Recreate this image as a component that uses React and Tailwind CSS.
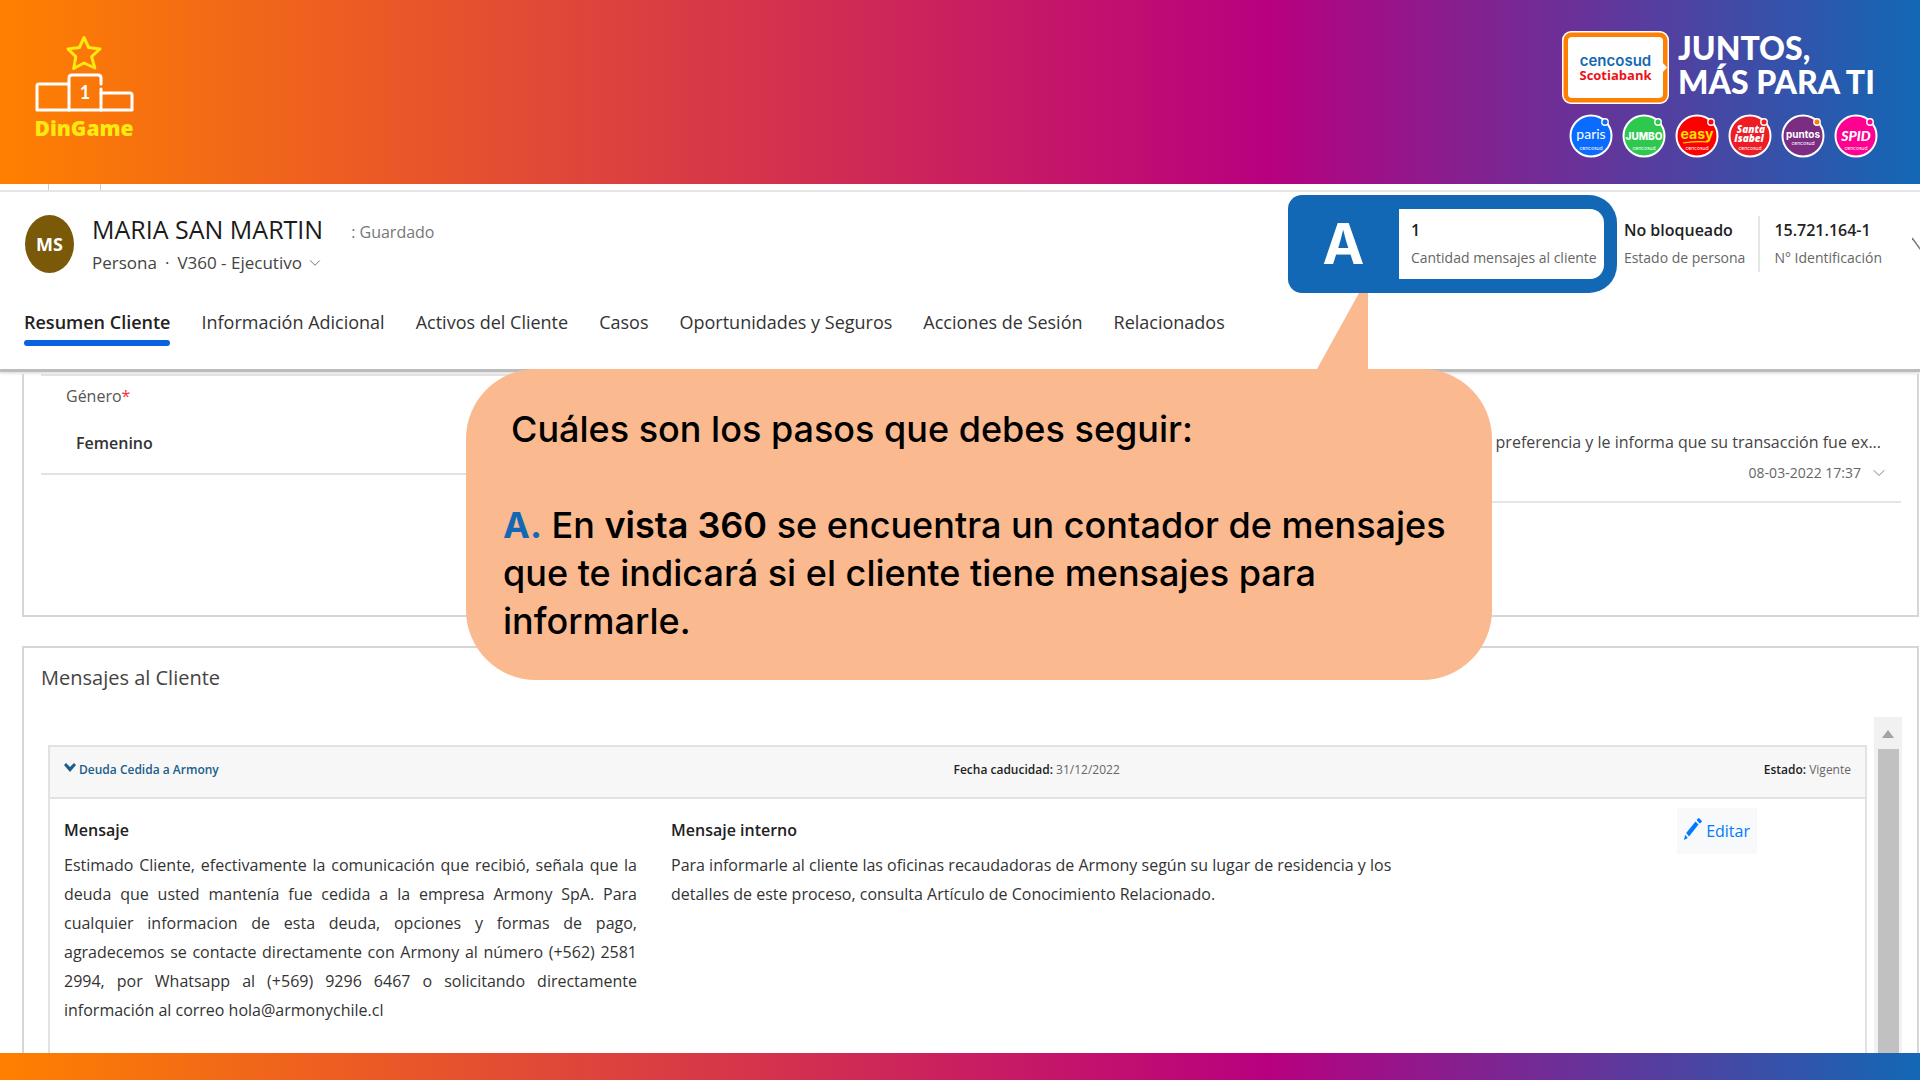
import { useState } from 'react';
import { ChevronDown } from 'lucide-react';

const tabs = [
  'Resumen Cliente',
  'Información Adicional',
  'Activos del Cliente',
  'Casos',
  'Oportunidades y Seguros',
  'Acciones de Sesión',
  'Relacionados',
];

const Podium = () => (
  <svg width="104" height="110" viewBox="0 -1 104 110" fill="none" role="img" aria-label="DinGame">
    <path
      d="M50 2.5L54.6 12.500 66 14 57.600 21.600 60.800 33 50 28 39.700 33.500 41.800 21.600 34 14 45.400 12.500z"
      stroke="#fde910"
      strokeWidth="3"
      strokeLinejoin="round"
    />
    <g stroke="#fff" strokeWidth="3" strokeLinecap="round" strokeLinejoin="round">
      <path d="M34 49H5q-2 0-2 2v24h95V60q0-2-2-2H67" />
      <path d="M35 75V43q0-3 3-3h26q3 0 3 3v6" />
      <path d="M67 54v21" />
    </g>
    <text x="51" y="64" textAnchor="middle" fontSize="18" fontWeight="700" fill="#fff" className="font-['Lato',sans-serif]">1</text>
    <text x="50" y="101" textAnchor="middle" fontSize="21" fontWeight="800" fill="#fde910" className="font-['Open_Sans',sans-serif]">DinGame</text>
  </svg>
);

const CardLogo = () => (
  <svg width="107" height="73" viewBox="0 0 107 73" role="img" aria-label="cencosud Scotiabank">
    <rect width="107" height="73" rx="9" fill="#fff" />
    <rect x="1.5" y="1.5" width="104" height="70" rx="8" fill="#ff8000" />
    <rect x="6" y="6" width="95" height="61" rx="4" fill="#fff" />
    <path d="M100 31l5 5.5-5 5.5z" fill="#fff" />
    <text x="53.5" y="35" textAnchor="middle" fontSize="15" fontWeight="600" fill="#1268b5" className="font-['Inter',sans-serif]">cencosud</text>
    <text x="53.5" y="49" textAnchor="middle" fontSize="13" fontWeight="700" fill="#ec111a" className="font-['Open_Sans',sans-serif]">Scotiabank</text>
  </svg>
);

const BrandBadge = ({ color, dot, sub = 34, children }) => (
  <svg width="44" height="44" viewBox="0 0 44 44">
    <circle cx="22" cy="22" r="20.5" fill={color} stroke="#fff" strokeWidth="2" />
    <circle cx="36" cy="8" r="3.2" fill={dot || color} stroke="#fff" strokeWidth="1.4" />
    <g fill="#fff" textAnchor="middle">
      {children}
      <text x="22" y={sub + 2} fontSize="5" className="font-['Inter',sans-serif]">cencosud</text>
    </g>
  </svg>
);

const Brands = () => (
  <div className="ml-[7px] mt-[10px] flex gap-[9px]">
    <BrandBadge color="#0a6cff">
      <text x="22" y="25" fontSize="14" className="font-['Lato',sans-serif]">paris</text>
    </BrandBadge>
    <BrandBadge color="#2dc84d">
      <text x="22" y="26" fontSize="10" fontWeight="800" className="font-['Inter',sans-serif]">JUMBO</text>
    </BrandBadge>
    <BrandBadge color="#ff0000">
      <text x="22" y="25" fontSize="14" fontWeight="700" fill="#ffe000" className="font-['Inter',sans-serif]">easy</text>
      <path d="M8 29q14-2 25-1" stroke="#ffe000" strokeWidth="1.2" fill="none" />
    </BrandBadge>
    <BrandBadge color="#ee1c25">
      <text x="23" y="19" fontSize="10" fontWeight="800" fontStyle="italic" className="font-['Open_Sans',sans-serif]">Santa</text>
      <text x="21" y="28" fontSize="10" fontWeight="800" fontStyle="italic" className="font-['Open_Sans',sans-serif]">Isabel</text>
    </BrandBadge>
    <BrandBadge color="#7b2d82" dot="#ff8000" sub={29}>
      <text x="22" y="24" fontSize="10" fontWeight="700" className="font-['Inter',sans-serif]">puntos</text>
    </BrandBadge>
    <BrandBadge color="#ff0090">
      <text x="22" y="27" fontSize="14" fontWeight="900" fontStyle="italic" className="font-['Lato',sans-serif]">SPID</text>
    </BrandBadge>
  </div>
);

const Stat = ({ value, label }) => (
  <div className="whitespace-nowrap">
    <p className="text-base leading-7 font-semibold text-[#222]">{value}</p>
    <p className="text-sm leading-7 text-[#666]">{label}</p>
  </div>
);

const App = () => {
  const [active, setActive] = useState(tabs[0]);

  return (
    <div className="relative flex min-h-screen flex-col overflow-hidden bg-white font-['Open_Sans',sans-serif] text-[#333]">
      <header className="flex h-[184px] shrink-0 items-start justify-between bg-[linear-gradient(90deg,#ff8000_0%,#b8007f_66%,#1268b5_100%)] pl-[34px] pr-[42px]">
        <div className="pt-[34px]">
          <Podium />
        </div>
        <div className="pt-[31px]">
          <div className="flex gap-[9px]">
            <CardLogo />
            <p className="whitespace-nowrap font-['Lato',sans-serif] text-[32px] leading-[34px] font-black text-white">
              JUNTOS,
              <br />
              MÁS PARA TI
            </p>
          </div>
          <Brands />
        </div>
      </header>

      <div className="flex h-[6px] shrink-0 gap-[51px] pl-12">
        <div className="w-px bg-[#ccc]" />
        <div className="w-px bg-[#ccc]" />
      </div>

      {/* Record header */}
      <section className="border-t-2 border-b-3 border-t-[#e5e5e5] border-b-[#bcbcbc] pt-[3px] pb-[23px] shadow-[0_2px_2px_#e5e5e5]">
        <div className="flex items-center justify-between pl-[25px]">
          <div className="flex items-center">
            <div className="flex h-[58px] w-[49px] items-center justify-center rounded-[50%] bg-[#7a5a08] text-lg font-bold text-white">
              MS
            </div>
            <div className="ml-[18px] pt-1">
              <div className="flex items-center gap-7">
                <h1 className="text-[25px] leading-[33px] font-medium text-[#1b1b1b]">MARIA SAN MARTIN</h1>
                <span className="pt-1 text-base text-[#777]">: Guardado</span>
              </div>
              <div className="flex items-center gap-2 text-[17px] leading-[33px] text-[#444]">
                <span>Persona</span>
                <span>·</span>
                <button type="button" className="flex items-center gap-1">
                  V360 - Ejecutivo
                  <ChevronDown size={18} strokeWidth={1} />
                </button>
              </div>
            </div>
          </div>

          <div className="flex items-center">
            <div className="flex w-[329px] items-center rounded-l-[14px] rounded-r-[28px] bg-[#1268b5] py-[14px] pr-[13px]">
              <div className="w-[111px] text-center font-['Inter',sans-serif] text-[56px] leading-[70px] font-bold text-white">
                A
              </div>
              <div className="flex-1 rounded-r-[14px] bg-white py-[7px] pl-3">
                <Stat value="1" label="Cantidad mensajes al cliente" />
              </div>
            </div>
            <div className="border-r-2 border-[#e5e5e5] pr-[13px] pl-[7px]">
              <Stat value="No bloqueado" label="Estado de persona" />
            </div>
            <div className="pr-[30px] pl-[14px]">
              <Stat value="15.721.164-1" label="N° Identificación" />
            </div>
            <svg width="8" height="16" viewBox="0 0 8 16" fill="none" stroke="#777" strokeWidth="1.5">
              <path d="M0 2l9 12" />
            </svg>
          </div>
        </div>

        <nav className="mt-[13px] flex gap-[31px] pl-6">
          {tabs.map((tab) => (
            <button
              key={tab}
              type="button"
              onClick={() => setActive(tab)}
              className={`text-lg leading-8 ${tab === active ? 'font-semibold text-[#222]' : 'text-[#333]'}`}
            >
              {tab}
              <span className={`mt-0.5 block h-[6px] rounded-full ${tab === active ? 'bg-[#0b62e0]' : ''}`} />
            </button>
          ))}
        </nav>
      </section>

      <main className="flex flex-1 flex-col pt-[2px] pr-px pl-[22px]">
        <section className="grid grid-cols-2 items-start gap-4 border-x-2 border-b-2 border-[#d6d6d6] pr-[16px] pb-[112px] pl-[17px]">
          <div className="border-y-2 border-[#e2e2e2] pt-2 pb-[18px]">
            <p className="pl-[25px] text-base text-[#555]">
              Género<span className="text-red-500">*</span>
            </p>
            <p className="mt-[23px] pl-[35px] text-base font-semibold text-[#333]">Femenino</p>
          </div>
          <div className="border-b-2 border-[#e8e4e4] pt-14 pr-[20px] pb-4 text-right">
            <p className="text-base text-[#444]">preferencia y le informa que su transacción fue ex...</p>
            <p className="-mr-2 mt-[7px] flex items-center justify-end gap-2 text-sm leading-6 text-[#666]">
              08-03-2022 17:37
              <ChevronDown size={20} strokeWidth={1} />
            </p>
          </div>
        </section>

        <section className="mt-[29px] flex flex-1 flex-col border-x-2 border-t-2 border-[#d6d6d6] pt-[14px]">
          <h2 className="pl-[17px] text-[20px] leading-8 text-[#444]">Mensajes al Cliente</h2>
          <div className="mt-[23px] flex flex-1 gap-[7px] pr-[15px] pl-6">
            <article className="mt-7 flex-1 border-x-2 border-t-2 border-[#e2e2e2]">
              <div className="grid grid-cols-2 border-b-2 border-[#e2e2e2] bg-[#f7f7f7] px-[14px] pt-[13px] pb-[17px] text-xs leading-5">
                <button type="button" className="flex items-center gap-[3px] font-semibold text-[#1b5e8c]">
                  <svg width="12" height="10" viewBox="0 0 12 10" className="mb-1">
                    <path d="M0 2l2-2 4 4 4-4 2 2-6 7z" fill="currentColor" />
                  </svg>
                  Deuda Cedida a Armony
                </button>
                <div className="-ml-1 flex justify-between text-[#666]">
                  <p>
                    <b className="font-semibold text-[#222]">Fecha caducidad:</b> 31/12/2022
                  </p>
                  <p>
                    <b className="font-semibold text-[#222]">Estado:</b> Vigente
                  </p>
                </div>
              </div>

              <div className="grid grid-cols-12 text-base">
                <div className="col-span-4 px-[14px] pt-[19px] pb-[27px]">
                  <h3 className="font-semibold text-[#222]">Mensaje</h3>
                  <p className="mt-[9px] mr-1 text-justify leading-[29px]">
                    Estimado Cliente, efectivamente la comunicación que recibió, señala que la deuda que usted
                    mantenía fue cedida a la empresa Armony SpA. Para cualquier informacion de esta deuda, opciones
                    y formas de pago, agradecemos se contacte directamente con Armony al número (+562) 2581 2994,
                    por Whatsapp al (+569) 9296 6467 o solicitando directamente información al correo
                    hola@armonychile.cl
                  </p>
                </div>
                <div className="col-span-5 px-4 pt-[19px]">
                  <h3 className="font-semibold text-[#222]">Mensaje interno</h3>
                  <p className="mt-[9px] leading-[29px]">
                    Para informarle al cliente las oficinas recaudadoras de Armony según su lugar de residencia y los
                    detalles de este proceso, consulta Artículo de Conocimiento Relacionado.
                  </p>
                </div>
                <div className="col-span-3 flex items-start justify-end pt-[9px] pr-[108px]">
                  <button type="button" className="flex items-center gap-1 bg-[#f8f9fa] px-[7px] py-[10px] text-[#007bff]">
                    <svg width="18" height="22" viewBox="0 0 18 22" fill="currentColor" className="mb-1">
                      <path d="M0 22l1.2-5.2L3.8 20zM2.2 15L11.5 3.4l3 3.2L5 18.6zM12.6 2L14 .4q.7-.7 1.400 0l2.100 2.200q.6.8 0 1.600L15.700 5.500z" />
                    </svg>
                    Editar
                  </button>
                </div>
              </div>
            </article>
            <div className="flex w-7 flex-col items-center bg-[#f1f1f1]">
              <svg width="12" height="8" viewBox="0 0 12 8" className="mt-[13px] mb-[11px]">
                <path d="M6 0l6 8H0z" fill="#a3a3a3" />
              </svg>
              <div className="w-[21px] flex-1 bg-[#c1c1c1]" />
            </div>
          </div>
        </section>
      </main>

      <footer className="h-[27px] shrink-0 bg-[linear-gradient(90deg,#ff8000_0%,#b8007f_66%,#1268b5_100%)]" />

      {/* Callout pointing at the message counter */}
      <aside className="absolute top-[369px] left-[466px] w-[1026px] rounded-[70px] bg-[#fab98e] pt-9 pr-9 pb-[35px] pl-[37px] font-['Inter',sans-serif] text-[36px] leading-[48px] font-medium text-black">
        <svg width="51" height="77" viewBox="0 0 51 77" className="absolute -top-[76px] right-[124px]">
          <path d="M42 0h9v77H0v-1z" fill="#fab98e" />
        </svg>
        <p className="pl-2">Cuáles son los pasos que debes seguir:</p>
        <p className="mt-12">
          <b className="font-bold text-[#1268b5]">A.</b> En <b className="font-semibold">vista 360</b> se encuentra un
          contador de mensajes que te indicará si el cliente tiene mensajes para informarle.
        </p>
      </aside>
    </div>
  );
};

export default App;
